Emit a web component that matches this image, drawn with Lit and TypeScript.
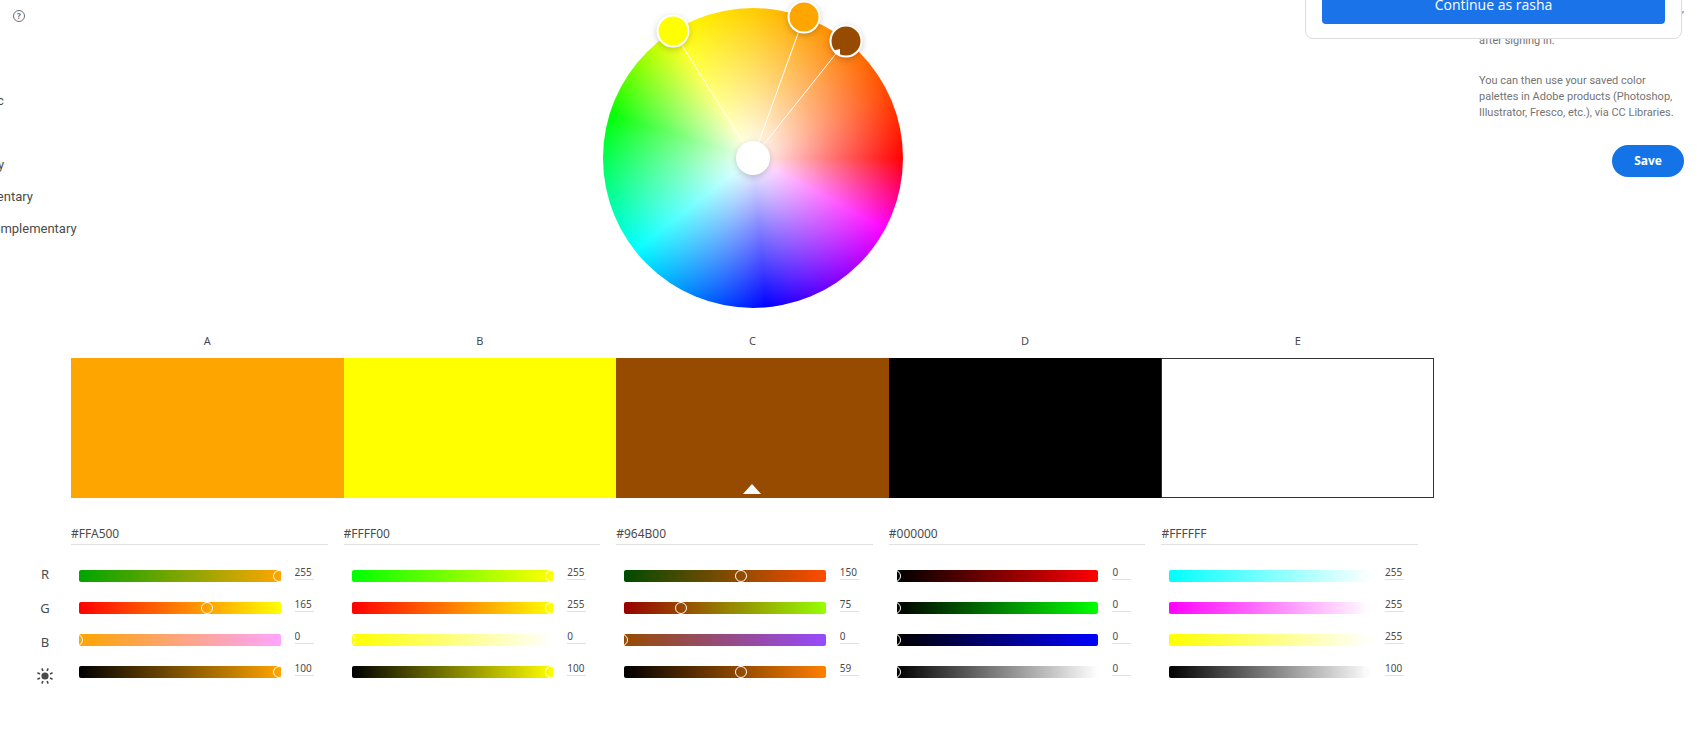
import { LitElement, html, svg, css } from "lit";
import { customElement, property, state } from "lit/decorators.js";
import { classMap } from "lit/directives/class-map.js";
import { styleMap } from "lit/directives/style-map.js";

type RGB = [number, number, number];

interface Swatch {
  name: string;
  rgb: RGB;
}

const hex = (c: RGB) =>
  "#" + c.map((v) => v.toString(16).padStart(2, "0")).join("").toUpperCase();
const rgbText = (c: RGB) => `rgb(${c.join(",")})`;
const brightness = (c: RGB) => Math.round((Math.max(...c) / 255) * 100);

/* The same hue at full brightness. */
const fullBright = (c: RGB): RGB => {
  const top = Math.max(...c);
  return top === 0
    ? [255, 255, 255]
    : (c.map((v) => Math.round((v * 255) / top)) as RGB);
};

const withChannel = (c: RGB, index: number, value: number): RGB =>
  c.map((v, i) => (i === index ? value : v)) as RGB;

@customElement("channel-slider")
class ChannelSlider extends LitElement {
  @property() label = "";
  @property({ type: Number }) value = 0;
  @property({ type: Number }) max = 255;
  @property() from = "";
  @property() to = "";

  static styles = css`
    :host {
      display: flex;
      gap: 14px;
      height: 18px;
    }
    .track {
      flex: 1;
      height: 12px;
      margin-top: 6px;
      border-radius: 2px;
      overflow: hidden;
    }
    .range {
      appearance: none;
      -webkit-appearance: none;
      display: block;
      width: calc(100% + 12px);
      height: 12px;
      margin: 0 0 0 -8px;
      background: none;
      outline: none;
    }
    .range::-webkit-slider-thumb {
      -webkit-appearance: none;
      box-sizing: border-box;
      width: 12px;
      height: 12px;
      border: 1px solid #fff;
      border-radius: 50%;
      background: none;
    }
    .number {
      box-sizing: border-box;
      width: 19px;
      height: 16px;
      padding: 2px 0 1px;
      border: 0;
      border-bottom: 1px solid #e1e1e1;
      border-radius: 0;
      background: none;
      color: #4b4b4b;
      font: 10px/12px "Noto Sans", sans-serif;
      outline: none;
    }
  `;

  private change(e: Event) {
    const value = Number((e.target as HTMLInputElement).value) || 0;
    this.dispatchEvent(new CustomEvent("pick", { detail: value }));
  }

  render() {
    return html`
      <div
        class="track"
        style=${styleMap({
          background: `linear-gradient(to right, ${this.from}, ${this.to})`,
        })}
      >
        <input
          class="range"
          type="range"
          min="0"
          max=${this.max}
          .value=${String(this.value)}
          aria-label=${this.label}
          @input=${this.change}
        />
      </div>
      <input
        class="number"
        type="text"
        .value=${String(this.value)}
        aria-label="${this.label} value"
        @change=${this.change}
      />
    `;
  }
}

@customElement("color-wheel")
class ColorWheel extends LitElement {
  static styles = css`
    :host {
      display: block;
      width: 300px;
      height: 300px;
      border-radius: 50%;
      background:
        radial-gradient(
          closest-side,
          #fff,
          rgba(255, 255, 255, 0.48) 50%,
          rgba(255, 255, 255, 0)
        ),
        conic-gradient(
          #ffcc00,
          #ffa500 20deg,
          #ff8000 38deg,
          #ff4800 64deg,
          #ff0000 90deg,
          #ff00ff 118deg,
          #0000ff 175deg,
          #00ffff 232deg,
          #00ff00 287deg,
          #ffff00 328deg,
          #ffcc00
        );
    }
    .overlay {
      display: block;
      width: 100%;
      height: 100%;
      overflow: visible;
    }
    .spoke {
      stroke: #fff;
      stroke-width: 1;
    }
    .handle {
      stroke: #fff;
      stroke-width: 2;
      filter: drop-shadow(0 2px 3px rgba(0, 0, 0, 0.2));
    }
  `;

  private handles = [
    { x: 70, y: 23, color: "#ffff00" },
    { x: 201, y: 9, color: "#ffa500" },
    { x: 243, y: 33, color: "#964b00" },
  ];

  render() {
    return html`
      <svg class="overlay" viewBox="0 0 300 300" role="img" aria-label="Color wheel">
        ${this.handles.map(
          (h) => svg`<line class="spoke" x1="150" y1="150" x2=${h.x} y2=${h.y} />`
        )}
        ${this.handles.map(
          (h) => svg`<circle class="handle" cx=${h.x} cy=${h.y} r="15.5" fill=${h.color} />`
        )}
        <path d="M231 42.5 L237 41 V47 L235 46 Z" fill="#fff" />
        <circle class="handle" cx="150" cy="150" r="16" fill="#fff" />
      </svg>
    `;
  }
}

@customElement("app-root")
class AppRoot extends LitElement {
  @state() private active = 2;
  @state() private swatches: Swatch[] = [
    { name: "A", rgb: [255, 165, 0] },
    { name: "B", rgb: [255, 255, 0] },
    { name: "C", rgb: [150, 75, 0] },
    { name: "D", rgb: [0, 0, 0] },
    { name: "E", rgb: [255, 255, 255] },
  ];

  private rules = [
    "Monochromatic",
    "Triad",
    "Complementary",
    "Split Complementary",
    "Double Split Complementary",
  ];

  static styles = css`
    :host {
      display: block;
      position: relative;
      overflow: hidden;
      min-height: 100vh;
      background: #fff;
      color: #4b4b4b;
      font-family: "Noto Sans", sans-serif;
      font-size: 12px;
      line-height: 16px;
    }
    .page {
      display: grid;
      grid-template-columns: 71px minmax(0, 1fr) 205px;
      grid-template-rows: auto 1fr;
      padding-right: 15px;
    }
    .rules {
      padding-top: 10px;
    }
    .help {
      display: block;
      box-sizing: border-box;
      width: 12px;
      height: 12px;
      margin-left: 13px;
      padding: 0;
      border: 1px solid #6e6e6e;
      border-radius: 50%;
      background: none;
      color: #6e6e6e;
      font: bold 8px/10px "Noto Sans", sans-serif;
      text-align: center;
    }
    .rule-list {
      margin: 63px 0 0 -88px;
      padding: 0;
      list-style: none;
      font-family: Roboto, sans-serif;
      font-size: 13px;
      line-height: 32px;
      white-space: nowrap;
    }
    .wheel-area {
      display: flex;
      justify-content: center;
      padding-top: 8px;
    }
    .wheel-area,
    .palette {
      margin-right: 45px;
    }
    .aside {
      grid-row: 1 / span 2;
      grid-column: 3;
      padding-top: 1px;
      color: #747474;
      font-family: Roboto, sans-serif;
      font-size: 11px;
    }
    .lead {
      margin: 0;
      text-align: right;
    }
    .link {
      color: #1473e6;
      text-decoration: none;
    }
    .note {
      margin: 0;
    }
    .note-first {
      padding-top: 16px;
    }
    .note-second {
      margin-top: 24px;
    }
    .actions {
      display: flex;
      justify-content: flex-end;
      margin-top: 24px;
    }
    .save {
      height: 32px;
      padding: 0 22px;
      border: 0;
      border-radius: 16px;
      background: #1473e6;
      color: #fff;
      font: bold 12px/16px "Noto Sans", sans-serif;
    }
    .channels {
      margin: 249px 0 0;
      padding: 0 17px 0 36px;
      list-style: none;
      font-size: 13px;
      text-align: center;
    }
    .channel {
      display: flex;
      align-items: center;
      justify-content: center;
      height: 34px;
    }
    .letters,
    .swatches,
    .editors {
      display: grid;
      grid-template-columns: repeat(5, minmax(0, 1fr));
    }
    .letters {
      padding: 25px 0 9px;
      font-size: 11px;
      text-align: center;
    }
    .swatch {
      display: flex;
      align-items: flex-end;
      justify-content: center;
      box-sizing: border-box;
      height: 140px;
      padding: 0 0 4px;
      border: 0;
      border-radius: 0;
    }
    .outlined {
      border: 1px solid #323232;
    }
    .pointer {
      display: block;
      width: 18px;
      height: 10px;
    }
    .editor {
      padding: 25px 16px 0 0;
    }
    .hex {
      display: block;
      box-sizing: border-box;
      width: 100%;
      height: 22px;
      padding: 1px 0 2px;
      border: 0;
      border-bottom: 1px solid #e1e1e1;
      border-radius: 0;
      background: none;
      color: #4b4b4b;
      font: 12px/18px "Noto Sans", sans-serif;
      outline: none;
    }
    .sliders {
      display: grid;
      gap: 14px;
      padding: 19px 14px 0 8px;
    }
    .card {
      position: absolute;
      top: -60px;
      right: 17px;
      box-sizing: border-box;
      width: 377px;
      padding: 43px 16px 14px;
      border: 1px solid #dadce0;
      border-radius: 8px;
      background: #fff;
    }
    .continue {
      display: block;
      width: 100%;
      height: 40px;
      padding: 2px 0 0;
      border: 0;
      border-radius: 4px;
      background: #1a73e8;
      color: #fff;
      font: 500 14px/20px "Open Sans", sans-serif;
    }
  `;

  private setColor(index: number, rgb: RGB) {
    this.swatches = this.swatches.map((s, i) => (i === index ? { ...s, rgb } : s));
  }

  private setBrightness(index: number, value: number) {
    const rgb = fullBright(this.swatches[index].rgb).map((v) =>
      Math.round((v * value) / 100)
    ) as RGB;
    this.setColor(index, rgb);
  }

  private renderEditor(s: Swatch, index: number) {
    return html`
      <div class="editor">
        <input class="hex" type="text" .value=${hex(s.rgb)} aria-label="Hex of color ${s.name}" />
        <div class="sliders">
          ${["R", "G", "B"].map(
            (name, c) => html`
              <channel-slider
                label="${s.name} ${name}"
                .value=${s.rgb[c]}
                .from=${rgbText(withChannel(s.rgb, c, 0))}
                .to=${rgbText(withChannel(s.rgb, c, 255))}
                @pick=${(e: CustomEvent) =>
                  this.setColor(index, withChannel(s.rgb, c, e.detail))}
              ></channel-slider>
            `
          )}
          <channel-slider
            label="${s.name} brightness"
            .max=${100}
            .value=${brightness(s.rgb)}
            from="#000"
            .to=${rgbText(fullBright(s.rgb))}
            @pick=${(e: CustomEvent) => this.setBrightness(index, e.detail)}
          ></channel-slider>
        </div>
      </div>
    `;
  }

  render() {
    return html`
      <main class="page">
        <section class="rules">
          <button class="help" aria-label="Help">?</button>
          <ul class="rule-list">
            ${this.rules.map((r) => html`<li>${r}</li>`)}
          </ul>
        </section>

        <section class="wheel-area"><color-wheel></color-wheel></section>

        <aside class="aside">
          <p class="lead"><a class="link" href="#">Creative Cloud,</a></p>
          <p class="note note-first">after signing in.</p>
          <p class="note note-second">
            You can then use your saved color palettes in Adobe products
            (Photoshop, Illustrator, Fresco, etc.), via CC Libraries.
          </p>
          <div class="actions"><button class="save">Save</button></div>
        </aside>

        <ul class="channels">
          <li class="channel">R</li>
          <li class="channel">G</li>
          <li class="channel">B</li>
          <li class="channel">
            <svg width="18" height="18" viewBox="0 0 18 18" role="img" aria-label="Brightness">
              <circle cx="9" cy="9" r="3.6" fill="#4b4b4b" />
              <g stroke="#4b4b4b" stroke-width="1.6">
                ${[22.5, 67.5, 112.5, 157.5, 202.5, 247.5, 292.5, 337.5].map(
                  (a) =>
                    svg`<line x1="9" y1="0.8" x2="9" y2="3.6" transform="rotate(${a} 9 9)" />`
                )}
              </g>
            </svg>
          </li>
        </ul>

        <section class="palette">
          <div class="letters">
            ${this.swatches.map((s) => html`<span>${s.name}</span>`)}
          </div>
          <div class="swatches">
            ${this.swatches.map(
              (s, i) => html`
                <button
                  class=${classMap({ swatch: true, outlined: hex(s.rgb) === "#FFFFFF" })}
                  style=${styleMap({ backgroundColor: rgbText(s.rgb) })}
                  aria-label="Color ${s.name}"
                  @click=${() => (this.active = i)}
                >
                  ${i === this.active
                    ? html`<svg class="pointer" viewBox="0 0 18 10" aria-hidden="true">
                        <path d="M9 0 L18 10 H0 Z" fill="#fff" />
                      </svg>`
                    : null}
                </button>
              `
            )}
          </div>
          <div class="editors">
            ${this.swatches.map((s, i) => this.renderEditor(s, i))}
          </div>
        </section>
      </main>

      <div class="card">
        <button class="continue">Continue as rasha</button>
      </div>
    `;
  }
}
